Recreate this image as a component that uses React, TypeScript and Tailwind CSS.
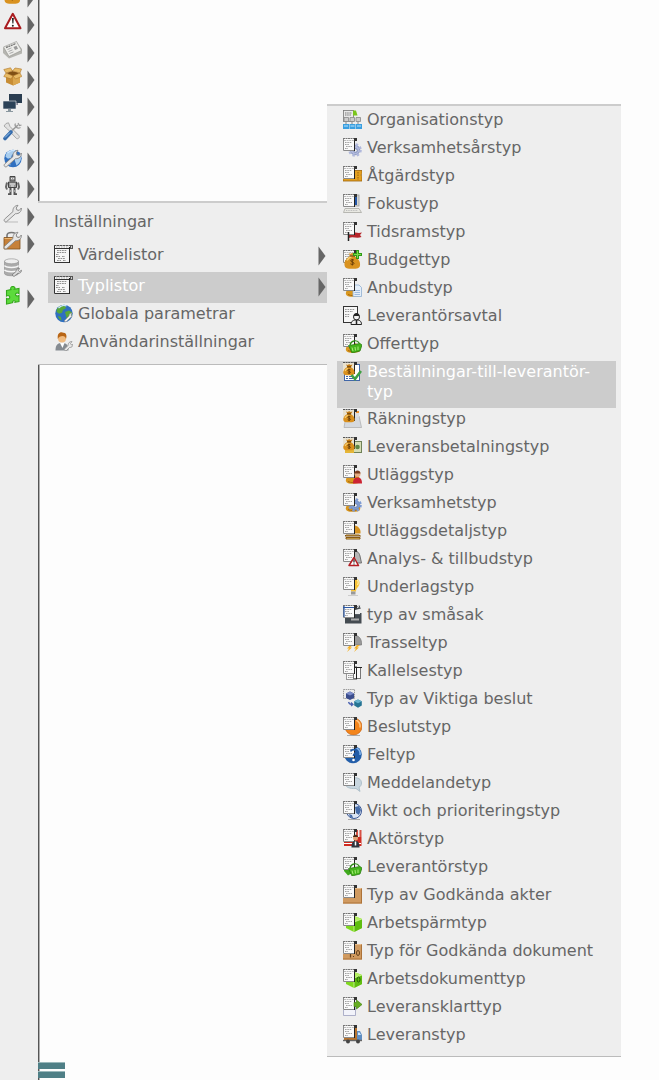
import type { ReactNode } from "react";
import clsx from "clsx";

function Icon({ children }: { children: ReactNode }) {
  return (
    <svg viewBox="0 0 19 19" className="size-[19px] shrink-0" aria-hidden="true">
      {children}
    </svg>
  );
}

function Arrow() {
  return (
    <svg viewBox="0 0 8 20" className="h-5 w-2 shrink-0" aria-hidden="true">
      <path d="M0.5 0.5 7.5 10 0.5 19.5z" fill="#666" />
    </svg>
  );
}

/* ---- drawing parts, all on a 19x19 grid ---- */

const Sheet = () => (
  <g>
    <rect x="0" y="1" width="12" height="12" fill="#fafafa" />
    <path d="M0.500 1v11.500h11" stroke="#8a8a8a" fill="none" />
    <path d="M0 0.500h13" stroke="#777" strokeDasharray="2 0.500" />
    <path d="M1 2.500h10" stroke="#bbb" strokeDasharray="2 0.600" />
    <path d="M11.500 1v12" stroke="#222" />
    <rect x="11" y="0" width="3" height="3" fill="#333" />
    <path d="M2 4.500h7M2 6.500h4M3 8.500h6M2 10.500h3" stroke="#8c8c8c" strokeWidth="0.800" strokeDasharray="1.600 0.700" />
  </g>
);

const BigSheet = () => (
  <g>
    <rect x="0" y="1" width="16" height="17" fill="#f6f6f6" />
    <path d="M0.500 1v16.500h15.500" stroke="#333" fill="none" />
    <path d="M0 0.500h17" stroke="#555" strokeDasharray="2.500 0.500" />
    <path d="M0 3.500h16" stroke="#333" />
    <path d="M2 2h13" stroke="#aaa" strokeDasharray="1.500 1" />
    <path d="M15.500 2v16" stroke="#222" />
    <rect x="16" y="0" width="3" height="4" fill="#555" />
    <path d="M17.500 1v2" stroke="#ccc" />
    <path d="M3 5.500h10M3 7.500h9M2 9.500h3M2 11.500h4M8 11.500h3M4 13.500h7M3 15.500h4M9 15.500h3" stroke="#777" strokeWidth="0.800" strokeDasharray="1.800 0.700" />
  </g>
);

const Bag = () => (
  <g>
    <path d="M7 5.500 5.600 3.200l2 .5 1.600-1 1.600 1 2-.5-1.400 2.300z" fill="#d9952a" />
    <path d="M7 6c-4 2.500-6.200 6-5.400 9.400.5 2.800 2.800 3.400 7.700 3.400s7.300-.7 7.700-3.400C17.600 12 15.400 8.500 11.500 6z" fill="#d9921f" />
    <path d="M4 10.500c1-2 2.500-3.300 4.500-3.800" stroke="#f6cf73" strokeWidth="1.600" fill="none" />
    <path d="M6.500 5.900h5.500" stroke="#744307" strokeWidth="1.200" />
    <path d="M11 10.200c-1-.9-3.300-.7-3.300.6 0 1.500 3.300.9 3.300 2.500 0 1.400-2.500 1.500-3.600.5M9.300 9v6.500" stroke="#633a08" strokeWidth="0.900" fill="none" />
  </g>
);

const LowBag = () => (
  <g>
    <path d="M4 12c5-5 11-3 13 2 1 4-2 4.800-7.500 4.800S1 17 4 12z" fill="#d9971f" />
    <path d="M5 16.500c3 1.500 7 1.500 10 0" stroke="#a96a0c" fill="none" />
  </g>
);

const TopBag = () => (
  <g>
    <rect x="0" y="1" width="12" height="9" fill="#e9e2d0" />
    <path d="M0 0.500h13" stroke="#555" strokeDasharray="2 0.600" />
    <path d="M11.500 1v11" stroke="#222" />
    <rect x="11" y="0" width="3" height="3" fill="#333" />
    <path d="M3 2.500l2 .5 1-1 1.500 1 2-.5L8 5H4.500z" fill="#c47a12" />
    <path d="M4.200 5C1.500 6.500 0 9 .3 11c.4 2 2 2.300 5.700 2.300s5.300-.300 5.600-2.300c.3-2-1.200-4.500-3.900-6z" fill="#da901d" />
    <path d="M2 9c.6-1.300 1.500-2.200 2.800-2.700" stroke="#f6cf73" strokeWidth="1.200" fill="none" />
    <path d="M4 4.900h4" stroke="#573307" />
    <path d="M7.500 7.800c-1-.7-2.800-.4-2.700.6.1 1 2.600.8 2.700 1.900 0 1-1.900 1-2.800.4M6.100 7v5" stroke="#573307" strokeWidth="0.800" fill="none" />
  </g>
);

const Gear = ({ fill = "#8fa4cf" }: { fill?: string }) => (
  <g>
    <circle cx="12" cy="12" r="4.800" fill={fill} stroke="#6478a5" strokeWidth="0.600" />
    <circle cx="12" cy="12" r="5.600" fill="none" stroke={fill} strokeWidth="2.400" strokeDasharray="2.400 2" />
    <circle cx="12.500" cy="12.500" r="1.800" fill="#eee" stroke="#6478a5" strokeWidth="0.700" />
  </g>
);

const Basket = () => (
  <g>
    <path d="M5.500 11.500 17 9.500l2 1.500-2 6-8 2z" fill="#45b41c" stroke="#217408" strokeWidth="0.700" />
    <path d="M7 11c1-4.500 7-6 9.500-1.500" stroke="#2b8c10" strokeWidth="1.200" fill="none" />
    <path d="M9 13.500l1 3.500M12 13l.5 3.500M15 12.500v3.500" stroke="#b4f585" strokeWidth="0.900" />
  </g>
);

const Box3d = () => (
  <g>
    <path d="M3 6 11 3l8 3v9l-8 4-8-4z" fill="#7fd820" />
    <path d="M3 6l8 3 8-3-8-3z" fill="#b4f060" />
    <path d="M11 9v10l8-4V6z" fill="#5fbd10" />
    <path d="M3 6l8 3 8-3M11 9v10" stroke="#e0ffb0" strokeWidth="0.700" fill="none" />
  </g>
);

const Folder = () => (
  <g>
    <path d="M6 1.500h5l1 1.500h7v15.500H0V5h6z" fill="#d09a60" />
    <path d="M0 18h19M18.500 3v15" stroke="#ad7339" />
    <path d="M12 3.500h6.500" stroke="#e8bd8c" />
  </g>
);

const Globe = ({ land = "#58a83a" }: { land?: string }) => (
  <g>
    <circle cx="10" cy="9.500" r="8.700" fill="#2f6fc0" />
    <path d="M3 5C5 1.500 9 .7 11 1.200l1 3-3 1.500-1 3-3 1-2.500-2zM11 8l4-1.500 3 2c.3 3-2 6.500-4.500 8L12 12zM4 12l3 1 .5 3.500C5.500 16 4.500 14 4 12z" fill={land} />
    <path d="M4.500 4c2.500-2.700 6-3 8-2" stroke="#cbe6ff" strokeWidth="1.200" fill="none" />
  </g>
);

const Wrench = () => (
  <path
    d="M1.500 15.200 10 7.500C9.500 4.500 11.500 1.500 15 1.300L13.200 4l.7 2 2.300.4L18.300 4c.5 3.500-2.300 6-5.800 5.700L3.800 17.500c-1.600 1.300-3.500-.9-2.300-2.300z"
    fill="#e6e6e6"
    stroke="#868686"
    strokeWidth="0.900"
  />
);

const Warning = () => (
  <g>
    <path d="M9.800 1.800 17.500 16.300H2z" fill="#fff" stroke="#a91c20" strokeWidth="2" strokeLinejoin="round" />
    <path d="M8.900 6h1.900l-.4 5.500h-1z" fill="#222" />
    <circle cx="9.800" cy="13.700" r="1" fill="#222" />
  </g>
);

const Robot = () => (
  <g>
    <path d="M7 .5h5v4.500H7zM5.500 6h8v5.500h-8z" fill="#999" stroke="#444" strokeWidth="1" />
    <path d="M4 6.500 3 11l1 2.500M15 6.500l1 4.500-1 2.500" stroke="#666" strokeWidth="2" fill="none" />
    <path d="M7.500 12v5.500M11.500 12v5.500M5 18.200h3.500M10.500 18.200H14" stroke="#555" strokeWidth="2" />
    <path d="M8 2.500h1M10.200 2.500h1M7 8h5M8 10h3M7 15h1M11 15h1" stroke="#eee" />
  </g>
);

const Puzzle = () => (
  <path
    d="M3.500 4.500 8 3.500C7 1.500 8.500.5 10 .5s2.500 1.500 1.500 2.700l4.500-.7v5c-2-1-3.500-.3-3.500 1s1.800 2 3.500 1v6l-4 .7c1-2.200-3-2-2.300.500l-6.200 1.300v-5.500c2 1 3.300 0 3.300-1.300S5.200 9 3.500 10z"
    fill="#5cdb3c"
    stroke="#35a71d"
    strokeWidth="1.100"
  />
);

/* ---- left toolbar ---- */

const tools: { name: string; icon: ReactNode; flyout?: boolean }[] = [
  { name: "Ekonomi", flyout: true, icon: <Bag /> },
  { name: "Risker", flyout: true, icon: <Warning /> },
  {
    name: "Nyheter",
    flyout: true,
    icon: (
      <>
        <path d="M0 8v5l6 5.500 13-5V9L14 3z" fill="#b5b5b0" />
        <path d="M.5 7 13.500 1.500l5 9L6 16.500z" fill="#ededea" stroke="#9a9a95" strokeWidth="0.700" />
        <path d="M3 7.500 13 3.500" stroke="#777" strokeWidth="1.400" strokeDasharray="2 0.600" />
        <path d="M4.500 9.500l4-1.600M5.500 11.500l4-1.600M6.500 13.500l4-1.600" stroke="#aaa" />
        <path d="m10.500 7 3-1.200 1.500 3-3 1.200z" fill="#999" />
      </>
    ),
  },
  {
    name: "Produkter",
    flyout: true,
    icon: (
      <>
        <path d="M3 7h14v8.500L10 18.500l-7-3z" fill="#c78d35" />
        <path d="M10 10v8.500l7-3V7z" fill="#daa64d" />
        <path d="M3 6 9.500 4l7.500 2-7 3z" fill="#805014" />
        <path d="M3 6 .8 2.500 7.500.8 9.500 4zM17 6l1.500-4L12 1 9.500 4zM3 6l-2.200 3.500L8 12l2-3zM17 6l1.800 3.500-6.300 2.500L10 9z" fill="#e8bb66" stroke="#ad752a" strokeWidth="0.600" />
      </>
    ),
  },
  {
    name: "Datorer",
    flyout: true,
    icon: (
      <>
        <path d="M6 0h13v9H6z" fill="#2a3d50" />
        <path d="M12 9h3v2h-3z" fill="#889" />
        <path d="M0 7h13v8H0z" fill="#2b4157" stroke="#eee" strokeWidth="0.600" />
        <path d="M5 15h3v2h2v1H3v-1h2z" fill="#8a979f" />
      </>
    ),
  },
  {
    name: "Verktyg",
    flyout: true,
    icon: (
      <>
        <path d="M3 1.500 1 4l3.500 3L13 16c1.500 2 4.500-.5 2.800-2.500L7 4.500 5.500.8z" fill="#e2e2e2" stroke="#999" strokeWidth="0.800" />
        <path d="M9 8.500 15 3" stroke="#999" strokeWidth="1.600" />
        <path d="M12.500 1.500c-1.500 2 1.500 6 5 4M15 1l1.500 2.500L18.500 3" stroke="#999" strokeWidth="1.200" fill="none" />
        <path d="M8 10 2 16.500" stroke="#356cad" strokeWidth="3.600" strokeLinecap="round" />
        <path d="M7 10.500 2 15.500" stroke="#98c4ee" strokeWidth="1" />
      </>
    ),
  },
  {
    name: "Miljö",
    flyout: true,
    icon: (
      <>
        <Globe land="#a9cdee" />
        <Wrench />
      </>
    ),
  },
  { name: "Automation", flyout: true, icon: <Robot /> },
  {
    name: "Inställningar",
    flyout: true,
    icon: (
      <>
        <path d="M2 18h13" stroke="#bbb" />
        <Wrench />
      </>
    ),
  },
  {
    name: "Behörighet",
    flyout: true,
    icon: (
      <>
        <path d="M4 8V4.500C4 .5 13 .5 13 4.500V8" stroke="#777" strokeWidth="1.600" fill="none" />
        <path d="M1 6.500h16V18H1z" fill="#c6813a" stroke="#80501d" strokeWidth="0.800" />
        <path d="M1.500 7.500h15" stroke="#ebb671" />
        <Wrench />
      </>
    ),
  },
  {
    name: "Databas",
    icon: (
      <>
        <path d="M1.500 3v12.500c0 3 14 3 14 0V3z" fill="#aaa" stroke="#888" strokeWidth="0.600" />
        <ellipse cx="8.500" cy="3.300" rx="7" ry="2.500" fill="#eee" stroke="#999" strokeWidth="0.700" />
        <path d="M1.500 7.500c1 2.500 13 2.500 14 0M1.500 11.800c1 2.500 13 2.500 14 0" stroke="#f5f5f5" strokeWidth="1.500" fill="none" />
        <path d="m9 17 4-3.500c0-2 1.500-3.300 3.500-3l-1.200 2 1.200 1 2-1.200c0 2-1.500 3.300-3.700 3L11 18.500z" fill="#ddd" stroke="#777" strokeWidth="0.800" />
      </>
    ),
  },
  { name: "Tillägg", flyout: true, icon: <Puzzle /> },
];

/* ---- type list menu ---- */

const types: { label: string; icon: ReactNode; active?: boolean }[] = [
  {
    label: "Organisationstyp",
    icon: (
      <>
        <rect x="0.500" y="0.500" width="10" height="11" fill="#e8e8e8" stroke="#777" strokeWidth="0.800" />
        <path d="M2 3h7M2 5h6" stroke="#777" strokeDasharray="1.500 0.700" />
        <path d="M10 .5h3l1.500 5H10z" fill="#7ac61a" />
        <path d="M1 7.500h4.500v4H1zM7 7.500h4.500v4H7zM13 7.500h4.500v4H13z" fill="#ccc" stroke="#888" strokeWidth="0.800" />
        <path d="M3 11.500v3M9 11.500v3M15 11.500v3" stroke="#888" />
        <path d="M0 14h6v5H0zM6.500 14h6v5h-6zM13 14h6v5h-6z" fill="#3a9fe0" />
        <path d="M1 16h4M7.500 16h4M14 16h4" stroke="#b9e4ff" />
      </>
    ),
  },
  { label: "Verksamhetsårstyp", icon: <><Gear fill="#b0b8dc" /><Sheet /></> },
  {
    label: "Åtgärdstyp",
    icon: (
      <>
        <path d="M0 4.500h19v3L18 9l1 1.500V15H0z" fill="#e3a022" stroke="#9c6207" strokeWidth="0.800" />
        <path d="M15 6v8" stroke="#9c6207" strokeDasharray="1.500 1" />
        <Sheet />
      </>
    ),
  },
  {
    label: "Fokustyp",
    icon: (
      <>
        <rect x="5" y="1" width="11" height="11" fill="#d4d4cf" stroke="#999" strokeWidth="0.800" />
        <path d="M2 14.500h14l2.500 4H.5z" fill="#e9e9e3" stroke="#a9a9a3" strokeWidth="0.800" />
        <path d="M3 16.500h12" stroke="#bbb" strokeDasharray="1 0.700" />
        <Sheet />
        <rect x="12" y="3" width="2" height="8" fill="#2456a6" />
      </>
    ),
  },
  {
    label: "Tidsramstyp",
    icon: (
      <>
        <path d="M6 11c4-2 8 1 13-.5l-2 2.500 1.500 2c-5 2-8.500-1-12.500 1z" fill="#b5262b" />
        <Sheet />
        <path d="M5.500 10v9" stroke="#222" strokeWidth="1.500" />
      </>
    ),
  },
  {
    label: "Budgettyp",
    icon: (
      <>
        <Sheet />
        <Bag />
        <path d="M14.500 0v9M10 4.500h9" stroke="#2f9c17" strokeWidth="3" />
        <path d="M14.500 1v7M11 4.500h7" stroke="#7fdb50" strokeWidth="1" />
      </>
    ),
  },
  {
    label: "Anbudstyp",
    icon: (
      <>
        <LowBag />
        <path d="M10 7h6l2.500 2.500v9H10z" fill="#e4eef9" stroke="#8faed0" strokeWidth="0.800" />
        <path d="M11.500 12.500h5.500M11.500 14.500h5.500M11.500 16.500h5.500" stroke="#9dbbe0" />
        <Sheet />
      </>
    ),
  },
  {
    label: "Leverantörsavtal",
    icon: (
      <>
        <rect x="0.500" y="0.500" width="14" height="16" fill="#f6f6f6" stroke="#333" />
        <path d="M2 3.500h10M2 5.500h8M2 8.500h5M2 10.500h4" stroke="#999" strokeDasharray="1.700 0.800" />
        <circle cx="13.500" cy="11" r="3" fill="#f2f2f2" stroke="#222" />
        <path d="M10.500 10c0-4 6-4 6 0z" fill="#222" />
        <path d="M8 18.500c0-4 3-4.500 5.500-4.500s5 .5 5 4.500z" fill="#eee" stroke="#222" />
        <path d="M13.500 14v4" stroke="#222" strokeWidth="1.500" />
      </>
    ),
  },
  { label: "Offerttyp", icon: <><LowBag /><Sheet /><Basket /></> },
  {
    label: "Beställningar-till-leverantör-typ",
    active: true,
    icon: (
      <>
        <rect x="1.500" y="2.500" width="15" height="16" fill="#fff" stroke="#4167a8" />
        <path d="M3 14.500h2M6 14.500h4M3 16.500h2M6 16.500h4" stroke="#4167a8" />
        <TopBag />
        <path d="m8.500 13 3.500 4 6-8" stroke="#3da044" strokeWidth="2.600" fill="none" />
      </>
    ),
  },
  {
    label: "Räkningstyp",
    icon: (
      <>
        <path d="M3 7h13l2.500 11.500H1z" fill="#d5d9df" stroke="#aaa" strokeWidth="0.700" />
        <path d="M12 2h4v6h-4z" fill="#ddd" />
        <path d="M13 2h3v2h-3z" fill="#f0932c" />
        <TopBag />
      </>
    ),
  },
  {
    label: "Leveransbetalningstyp",
    icon: (
      <>
        <rect x="9.500" y="4.500" width="9" height="11" fill="#d6ddb4" stroke="#6f8158" />
        <circle cx="14.500" cy="10" r="2.300" fill="#5f8645" />
        <path d="M2 12h9v4H2z" fill="#e5b637" />
        <TopBag />
      </>
    ),
  },
  {
    label: "Utläggstyp",
    icon: (
      <>
        <LowBag />
        <Sheet />
        <circle cx="14.500" cy="9" r="3" fill="#e6ad83" />
        <path d="M11.500 8.500c0-4 6-4 6 0z" fill="#7c3c1c" />
        <path d="M10 18.500c0-5 2-6 4.500-6s4.500 1 4.500 6z" fill="#cc2432" />
      </>
    ),
  },
  { label: "Verksamhetstyp", icon: <><LowBag /><Gear fill="#7e9bd2" /><Sheet /></> },
  {
    label: "Utläggsdetaljstyp",
    icon: (
      <>
        <path d="M12 4.500c4 1 6 4 5.500 8H4z" fill="#d69320" />
        <path d="M3 14h13l1.500 1H2zM3 16.500h14V18H3z" fill="#f7d573" stroke="#7b4a08" strokeWidth="0.900" />
        <Sheet />
      </>
    ),
  },
  {
    label: "Analys- & tillbudstyp",
    icon: (
      <>
        <path d="M8 2c5-1.500 8 1 9 5l1.500 7H8z" fill="#b5b5b5" stroke="#666" strokeWidth="0.900" />
        <Sheet />
        <path d="M11 8.500 15.500 16.500H6z" fill="#fff" stroke="#b51f24" strokeWidth="1.500" strokeLinejoin="round" />
        <path d="M11 10.500v3M11 14.500v1" stroke="#222" strokeWidth="1.200" />
      </>
    ),
  },
  {
    label: "Underlagstyp",
    icon: (
      <>
        <path d="M8 2c4-2 9 0 8.500 4.500C16 10 13 11 13 14.500H8z" fill="#f8c338" />
        <path d="M14 3c1.500 1 1.500 3 .5 5" stroke="#fff1ae" strokeWidth="1.200" fill="none" />
        <path d="M8 14.500h4.500v3H8z" fill="#999" />
        <path d="M5 18.500h10" stroke="#ccc" />
        <Sheet />
      </>
    ),
  },
  {
    label: "typ av småsak",
    icon: (
      <>
        <path d="M2 8h16.500v10.500H2z" fill="#444b51" />
        <path d="m1 4 16-3.500.8 3-15 4z" fill="#3c4247" />
        <path d="M11 8.500h6" stroke="#eee" strokeWidth="1.200" />
        <path d="M8 14.500h8" stroke="#aaa" strokeWidth="2" />
        <Sheet />
        <path d="M0 2.500h11M1 1v11" stroke="#2c59a5" strokeWidth="1.200" />
        <path d="m14.500 3 1-2M17 2.500l1-1.500" stroke="#eee" strokeWidth="1.200" />
      </>
    ),
  },
  {
    label: "Trasseltyp",
    icon: (
      <>
        <path d="M6 12h12.500c.5-7-3-10-9-10z" fill="#999" stroke="#777" strokeWidth="0.700" />
        <path d="m7 12-3 3.500h2L4 19l5-4.500H7l3-2.500zM14 12l-3 3.500h2L11 19l5-4.500h-2l3-2.500z" fill="#f5b32a" />
        <Sheet />
      </>
    ),
  },
  {
    label: "Kallelsestyp",
    icon: (
      <>
        <rect x="3.500" y="5.500" width="10" height="13" fill="#f7f7f7" stroke="#999" />
        <path d="M5 14.500h6M5 16.500h6" stroke="#999" strokeDasharray="1.500 0.700" />
        <rect x="10.500" y="6.500" width="7" height="11" fill="#fafafa" stroke="#777" />
        <path d="M13.500 7v11M11 6.500h8" stroke="#222" />
        <Sheet />
      </>
    ),
  },
  {
    label: "Typ av Viktiga beslut",
    icon: (
      <>
        <path d="M.5.500h11v9H.5z" fill="#eee" stroke="#777" strokeWidth="0.700" strokeDasharray="1.500 0.700" />
        <path d="m7 2.500 4 2v4.500l-4 2-4-2V4.500z" fill="#3b4d8d" />
        <path d="m3 4.500 4 2 4-2-4-2z" fill="#7b8cc9" />
        <path d="m15 10.500 3.800 1.800v4.200L15 18.700l-3.800-2.200v-4.200z" fill="#267493" />
        <path d="m11.200 12.300 3.800 2 3.800-2-3.800-1.800z" fill="#68b3ce" />
        <path d="M5.500 13c.5 2 2 2.500 4 2.500m-1.500-2 2 2-2 1.500" stroke="#4b62b0" strokeWidth="1.200" fill="none" />
      </>
    ),
  },
  {
    label: "Beslutstyp",
    icon: (
      <>
        <circle cx="10.500" cy="9.500" r="8.500" fill="#f3851c" stroke="#c95e0a" strokeWidth="0.700" />
        <path d="M13 3c3 1.500 4.500 4 4 7.500" stroke="#ffc27c" strokeWidth="1.500" fill="none" />
        <path d="M4 18.500h13" stroke="#999" strokeWidth="0.800" />
        <Sheet />
      </>
    ),
  },
  {
    label: "Feltyp",
    icon: (
      <>
        <circle cx="10" cy="9.500" r="8.800" fill="#235ea9" />
        <path d="M13.500 3c3 1.500 4 4 3.500 7" stroke="#7eb2eb" strokeWidth="1.500" fill="none" />
        <Sheet />
        <path d="M8 6.500c0-2.500 5-2.500 5 0 0 2-2.500 2-2.500 4.500" stroke="#245ba5" strokeWidth="1.800" fill="none" />
        <circle cx="10.500" cy="15" r="1.300" fill="#fff" />
      </>
    ),
  },
  {
    label: "Meddelandetyp",
    icon: (
      <>
        <path d="M9 5c6-1 9.500 1 9.500 5 0 2-1 3.500-2.500 4.500l1 4-4-3C6 16 3 14 2 11z" fill="#c8d6df" stroke="#9eb3bf" strokeWidth="0.700" />
        <Sheet />
      </>
    ),
  },
  {
    label: "Vikt och prioriteringstyp",
    icon: (
      <>
        <circle cx="11" cy="10" r="7.500" fill="#dce5f2" stroke="#3b5895" />
        <path d="M12 6l4-1 2 4-2 5-3-2zM6 13l3 1 1 3c-2 0-3.500-1.500-4-4z" fill="#456ba7" />
        <path d="M5 18.500h12" stroke="#aaa" />
        <Sheet />
      </>
    ),
  },
  {
    label: "Aktörstyp",
    icon: (
      <>
        <path d="M1 8h17.500v9H1z" fill="#d02a20" />
        <path d="M13 1h2v7h-2zM16.500 1h2v7h-2z" fill="#d85144" />
        <path d="M1 14.500h17" stroke="#fff" />
        <Sheet />
        <circle cx="12.500" cy="9" r="2.500" fill="#e2a477" />
        <path d="M10 8c0-3 5-3 5 0z" fill="#4d2c18" />
        <path d="M8.500 18.500c0-5 1.500-6.500 4-6.500s4 1.500 4 6.500z" fill="#30343e" />
        <path d="M12.500 12.500v4" stroke="#fff" strokeWidth="1.500" />
      </>
    ),
  },
  {
    label: "Leverantörstyp",
    icon: (
      <>
        <path d="M1 11h6v4l3 .5-5 3L1 14z" fill="#3fa91d" />
        <Sheet />
        <Basket />
      </>
    ),
  },
  { label: "Typ av Godkända akter", icon: <><Folder /><Sheet /></> },
  { label: "Arbetspärmtyp", icon: <><Box3d /><Sheet /></> },
  {
    label: "Typ för Godkända dokument",
    icon: (
      <>
        <Folder />
        <path d="M7.500 13v3.500M10 15.500h1" stroke="#664018" strokeWidth="1.200" />
        <ellipse cx="15" cy="12" rx="1.500" ry="2.500" fill="none" stroke="#664018" />
        <Sheet />
      </>
    ),
  },
  {
    label: "Arbetsdokumenttyp",
    icon: (
      <>
        <Box3d />
        <ellipse cx="15.500" cy="10.500" rx="1.500" ry="2.500" fill="none" stroke="#245c08" />
        <Sheet />
      </>
    ),
  },
  {
    label: "Leveransklarttyp",
    icon: (
      <>
        <path d="M.5 7.500h12v11H.5z" fill="#f2f3fa" stroke="#9ca0be" strokeWidth="0.800" />
        <Sheet />
        <path d="M11 5.500h2.500V3L19 7.500 13.500 12V9.500H11z" fill="#66ad21" stroke="#468610" strokeWidth="0.700" />
      </>
    ),
  },
  {
    label: "Leveranstyp",
    icon: (
      <>
        <path d="M1 3h13v12.500H1z" fill="#b7742e" />
        <path d="M14 6h3l2 4v5.500h-5z" fill="#5e8dc2" />
        <path d="M15 7.500h1.500L18 10h-3z" fill="#d4e9fa" />
        <path d="M0 15.500h19" stroke="#666" strokeWidth="1.400" />
        <circle cx="5" cy="16.500" r="2" fill="#444" />
        <circle cx="15" cy="16.500" r="2" fill="#444" />
        <Sheet />
      </>
    ),
  },
];

function Toolbar() {
  return (
    <aside className="w-10 shrink-0 border-r border-[#b0b0b0] bg-[#eee]">
      <div className="min-h-screen border-r border-[#555]">
        <div className="flex h-[310px] flex-col justify-end overflow-hidden">
          <ul className="grid h-[328px] shrink-0 auto-rows-fr">
            {tools.map((tool) => (
              <li key={tool.name}>
                <button type="button" aria-label={tool.name} className="flex h-full w-full gap-[5px] pt-[3px] pl-[3px]">
                  <Icon>{tool.icon}</Icon>
                  {tool.flyout && (
                    <span className="pt-[3px]">
                      <Arrow />
                    </span>
                  )}
                </button>
              </li>
            ))}
          </ul>
        </div>
      </div>
    </aside>
  );
}

function SettingsMenu() {
  return (
    <nav
      aria-label="Inställningar"
      className="z-10 mt-[201px] -ml-0.5 w-[289px] shrink-0 border-t-2 border-b border-t-[#ccc] border-b-[#bbb] bg-[#eee] pb-[5px] pl-2.5"
    >
      <h2 className="px-1.5 pt-[9px] pb-[9px] leading-5">Inställningar</h2>
      <ul>
        <li>
          <button type="button" className="flex h-[31px] w-full gap-[5px] pt-1 pl-1.5">
            <Icon><BigSheet /></Icon>
            <span className="leading-5">Värdelistor</span>
            <span className="mr-px ml-auto pt-px"><Arrow /></span>
          </button>
        </li>
        <li>
          <button type="button" className="flex h-[31px] w-full gap-[5px] bg-[#ccc] pt-1 pl-1.5 text-white">
            <Icon><BigSheet /></Icon>
            <span className="leading-5">Typlistor</span>
            <span className="mr-px ml-auto pt-px"><Arrow /></span>
          </button>
        </li>
        <li>
          <a href="#parametrar" className="flex h-7 gap-[5px] pt-px pl-1.5">
            <Icon>
              <Globe />
              <path d="m10 17 5-5c0-2 1-3 3-3l-1 2 1 1.500-2 1.500-4 4z" fill="#eee" stroke="#888" strokeWidth="0.600" />
            </Icon>
            <span className="leading-5">Globala parametrar</span>
          </a>
        </li>
        <li>
          <a href="#anvandare" className="flex h-7 gap-[5px] pt-px pl-1.5">
            <Icon>
              <path d="M1.500 18.500c0-6 2.500-7.500 6.500-7.500s6.500 1.500 6.500 7.500z" fill="#858b91" />
              <path d="m6 11 2.500 5 2-5z" fill="#fff" />
              <circle cx="8" cy="6.500" r="4" fill="#f0bb80" />
              <path d="M3.800 7C3 .5 7-.5 9.500.8c3 .2 3.500 3 2.500 6.200-.5-2-1.500-3-3.500-3S4.500 5 3.800 7z" fill="#b86515" />
              <path d="m10 17.500 4-4c0-2.500 1.500-4 4-4l-1.500 2 1 1.500 1.500-.5c0 2-1.500 3-3.500 3l-3.500 3.500z" fill="#e8e8e8" stroke="#888" strokeWidth="0.700" />
            </Icon>
            <span className="leading-5">Användarinställningar</span>
          </a>
        </li>
      </ul>
    </nav>
  );
}

function TypeMenu() {
  return (
    <nav
      aria-label="Typlistor"
      className="z-10 mt-[104px] w-[294px] shrink-0 border-t-2 border-b border-t-[#ccc] border-b-[#bbb] bg-[#eee] pt-[3px] pr-[5px] pb-1 pl-2.5"
    >
      <ul>
        {types.map((type) => (
          <li key={type.label}>
            <a
              href="#typ"
              className={clsx(
                "flex min-h-7 gap-[5px] pt-px pr-2 pb-1.5 pl-1.5 leading-5",
                type.active && "bg-[#ccc] text-white",
              )}
            >
              <Icon>{type.icon}</Icon>
              <span>{type.label}</span>
            </a>
          </li>
        ))}
      </ul>
    </nav>
  );
}

export default function App() {
  return (
    <div className="relative flex min-h-screen items-start bg-[#fdfdfd] font-['Verdana','DejaVu_Sans',sans-serif] text-base text-[#666]">
      <Toolbar />
      <SettingsMenu />
      <TypeMenu />
      <button
        type="button"
        aria-label="Visa panel"
        className="absolute bottom-0.5 left-[38px] flex w-[27px] flex-col gap-0.5"
      >
        <span className="h-[7px] w-full border-t border-[#9ab8bb] bg-[#4f7f86]" />
        <span className="h-[7px] w-full border-t border-[#9ab8bb] bg-[#4f7f86]" />
      </button>
    </div>
  );
}
